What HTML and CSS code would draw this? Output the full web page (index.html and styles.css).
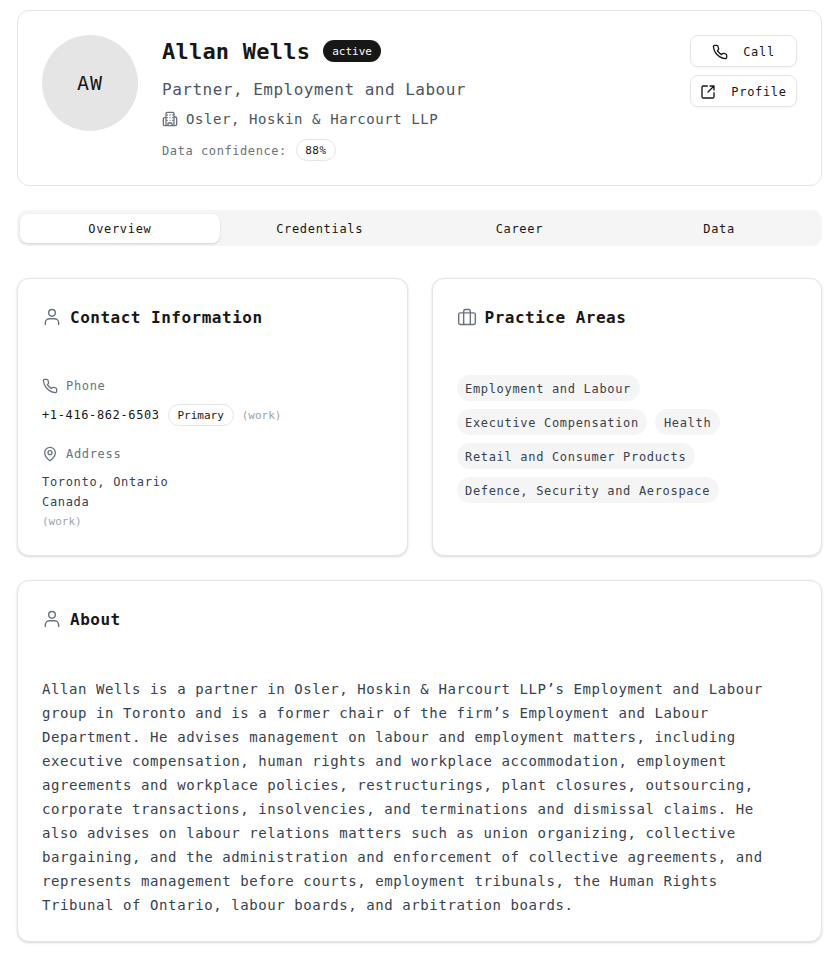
FILE: index.html
```html
<!doctype html>
<html lang="en">
<head>
	<meta charset="UTF-8">
	<title>Allan Wells</title>
	<link rel="stylesheet" href="styles.css">
</head>
<body>

	<div class="card heroCard">
		<div class="avatar">AW</div>
		<div class="heroInfo">
			<div class="nameRow">
				<h1 class="name">Allan Wells</h1>
				<span class="statusPill">active</span>
			</div>
			<p class="role">Partner, Employment and Labour</p>
			<p class="firm">
				<svg class="icon16" viewBox="0 0 24 24"><path d="M12 10h.01M12 14h.01M12 6h.01M16 10h.01M16 14h.01M16 6h.01M8 10h.01M8 14h.01M8 6h.01M9 22v-3a1 1 0 0 1 1-1h4a1 1 0 0 1 1 1v3M6 4v16a2 2 0 0 0 2 2h8a2 2 0 0 0 2-2V4a2 2 0 0 0-2-2H8a2 2 0 0 0-2 2ZM6 10H4a2 2 0 0 0-2 2v8a2 2 0 0 0 2 2h2M18 9h2a2 2 0 0 1 2 2v9a2 2 0 0 1-2 2h-2"/></svg>
				Osler, Hoskin &amp; Harcourt LLP
			</p>
			<div class="confidence">
				<span class="confidenceLabel">Data confidence:</span>
				<span class="confidencePill">88%</span>
			</div>
		</div>
		<div class="heroActions">
			<a class="actionBtn">
				<svg class="icon16 dark" viewBox="0 0 24 24"><path d="M22 16.92v3a2 2 0 0 1-2.18 2 19.79 19.79 0 0 1-8.63-3.07 19.5 19.5 0 0 1-6-6 19.79 19.79 0 0 1-3.07-8.67A2 2 0 0 1 4.11 2h3a2 2 0 0 1 2 1.72c.13.96.36 1.9.7 2.81a2 2 0 0 1-.45 2.11L8.09 9.91a16 16 0 0 0 6 6l1.27-1.27a2 2 0 0 1 2.11-.45c.91.34 1.85.57 2.81.7A2 2 0 0 1 22 16.92Z"/></svg>
				Call
			</a>
			<a class="actionBtn">
				<svg class="icon16 dark" viewBox="0 0 24 24"><path d="M21 13v6a2 2 0 0 1-2 2H5a2 2 0 0 1-2-2V5a2 2 0 0 1 2-2h6M21 9V3h-6M21 3l-9 9"/></svg>
				Profile
			</a>
		</div>
	</div>

	<div class="tabs">
		<div class="tab tabActive">Overview</div>
		<div class="tab">Credentials</div>
		<div class="tab">Career</div>
		<div class="tab">Data</div>
	</div>

	<div class="columns">
		<div class="card panel">
			<h2 class="panelTitle">
				<svg class="icon20" viewBox="0 0 24 24"><circle cx="12" cy="7" r="4"/><path d="M4 21v-2a5 5 0 0 1 5-5h6a5 5 0 0 1 5 5v2"/></svg>
				Contact Information
			</h2>
			<div class="panelBody">
				<div class="fieldLabel">
					<svg class="icon16" viewBox="0 0 24 24"><path d="M22 16.92v3a2 2 0 0 1-2.18 2 19.79 19.79 0 0 1-8.63-3.07 19.5 19.5 0 0 1-6-6 19.79 19.79 0 0 1-3.07-8.67A2 2 0 0 1 4.11 2h3a2 2 0 0 1 2 1.72c.13.96.36 1.9.7 2.81a2 2 0 0 1-.45 2.11L8.09 9.91a16 16 0 0 0 6 6l1.27-1.27a2 2 0 0 1 2.11-.45c.91.34 1.85.57 2.81.7A2 2 0 0 1 22 16.92Z"/></svg>
					Phone
				</div>
				<div class="phoneRow">
					<span class="phoneNumber">+1-416-862-6503</span>
					<span class="primaryPill">Primary</span>
					<span class="workNote">(work)</span>
				</div>
				<div class="fieldLabel addressLabel">
					<svg class="icon16" viewBox="0 0 24 24"><path d="M20 10c0 5-5.5 10.2-7.4 11.8a1 1 0 0 1-1.2 0C9.5 20.2 4 15 4 10a8 8 0 0 1 16 0Z"/><circle cx="12" cy="10" r="3"/></svg>
					Address
				</div>
				<div class="addressLine">Toronto, Ontario</div>
				<div class="addressLine">Canada</div>
				<div class="workNote workBelow">(work)</div>
			</div>
		</div>

		<div class="card panel">
			<h2 class="panelTitle">
				<svg class="icon20" viewBox="0 0 24 24"><path d="M8 21V5a2 2 0 0 1 2-2h4a2 2 0 0 1 2 2v16"/><rect x="2" y="7" width="20" height="14" rx="2"/></svg>
				Practice Areas
			</h2>
			<div class="panelBody tagList">
				<span class="tag">Employment and Labour</span>
				<span class="tag">Executive Compensation</span>
				<span class="tag">Health</span>
				<span class="tag">Retail and Consumer Products</span>
				<span class="tag">Defence, Security and Aerospace</span>
			</div>
		</div>
	</div>

	<div class="card panel">
		<h2 class="panelTitle">
			<svg class="icon20" viewBox="0 0 24 24"><circle cx="12" cy="7" r="4"/><path d="M4 21v-2a5 5 0 0 1 5-5h6a5 5 0 0 1 5 5v2"/></svg>
			About
		</h2>
		<p class="panelBody aboutText">Allan Wells is a partner in Osler, Hoskin &amp; Harcourt LLP’s Employment and Labour group in Toronto and is a former chair of the firm’s Employment and Labour Department. He advises management on labour and employment matters, including executive compensation, human rights and workplace accommodation, employment agreements and workplace policies, restructurings, plant closures, outsourcing, corporate transactions, insolvencies, and terminations and dismissal claims. He also advises on labour relations matters such as union organizing, collective bargaining, and the administration and enforcement of collective agreements, and represents management before courts, employment tribunals, the Human Rights Tribunal of Ontario, labour boards, and arbitration boards.</p>
	</div>

</body>
</html>
```

FILE: styles.css
```css
html, body {
	margin: 0;
	padding: 0;
}
body {
	padding: 10px 12px 16px 17px;
	background-color: #fff;
	color: #171717;
	font-family: "DejaVu Sans Mono", "Liberation Mono", monospace;
	font-size: 12px;
	letter-spacing: 0.68px;
}
p, h1, h2 {
	margin: 0;
	font-weight: normal;
}

svg {
	flex: none;
	fill: none;
	stroke: #6b7280;
	stroke-width: 2;
	stroke-linecap: round;
	stroke-linejoin: round;
}
.icon16 {
	width: 16px;
	height: 16px;
}
.icon20 {
	width: 20px;
	height: 20px;
	stroke-width: 1.7;
}
.dark {
	stroke: #171717;
}

.card {
	background-color: #fff;
	border: 1px solid #e5e5e5;
	border-radius: 12px;
}

/* top card */
.heroCard {
	display: flex;
	gap: 24px;
	padding: 24px;
}
.avatar {
	display: flex;
	flex: none;
	align-items: center;
	justify-content: center;
	width: 96px;
	height: 96px;
	border-radius: 50%;
	background-color: #e5e5e5;
	font-size: 20px;
	letter-spacing: 1px;
}
.heroInfo {
	flex: 1;
}
.nameRow {
	display: flex;
	align-items: center;
	gap: 13px;
	height: 32px;
}
.name {
	font-size: 22px;
	font-weight: bold;
	letter-spacing: 0.22px;
}
.statusPill {
	display: flex;
	align-items: center;
	justify-content: center;
	width: 58px;
	height: 22px;
	border-radius: 11px;
	background-color: #171717;
	color: #fafafa;
	font-size: 11px;
	letter-spacing: 0;
}
.role {
	margin-top: 11px;
	color: #4b5563;
	font-size: 16px;
	line-height: 24px;
	letter-spacing: 0.5px;
}
.firm {
	display: flex;
	align-items: center;
	gap: 8px;
	margin-top: 7px;
	color: #4b5563;
	font-size: 14px;
	letter-spacing: 0.58px;
	line-height: 20px;
}
.confidence {
	display: flex;
	align-items: center;
	gap: 9px;
	margin-top: 10px;
	color: #6b7280;
}
.confidenceLabel {
	padding-top: 2px;
	letter-spacing: 0.58px;
}
.confidencePill {
	display: flex;
	align-items: center;
	justify-content: center;
	width: 38px;
	height: 20px;
	border: 1px solid #e5e5e5;
	border-radius: 11px;
	color: #171717;
	font-size: 11px;
	letter-spacing: 0.5px;
}
.heroActions {
	display: flex;
	flex-direction: column;
	gap: 8px;
}
.actionBtn {
	display: flex;
	align-items: center;
	justify-content: center;
	gap: 15px;
	box-sizing: border-box;
	width: 107px;
	height: 32px;
	padding-top: 1px;
	border: 1px solid #e5e5e5;
	border-radius: 8px;
	box-shadow: 0 1px 2px rgba(0, 0, 0, 0.05);
}

/* tabs */
.tabs {
	display: grid;
	grid-template-columns: repeat(4, 1fr);
	margin: 24px 0 32px;
	padding: 4px 3px 3px;
	border-radius: 10px;
	background-color: #f5f5f5;
}
.tab {
	display: flex;
	align-items: center;
	justify-content: center;
	height: 29px;
	border-radius: 8px;
}
.tabActive {
	background-color: #fff;
	box-shadow: 0 1px 3px rgba(0, 0, 0, 0.1), 0 1px 2px rgba(0, 0, 0, 0.06);
}

/* panels */
.columns {
	display: grid;
	grid-template-columns: 1fr 1fr;
	gap: 24px;
	margin-bottom: 24px;
}
.panel {
	padding: 24px;
	box-shadow: 0 1px 3px rgba(0, 0, 0, 0.1), 0 1px 2px rgba(0, 0, 0, 0.06);
}
.panelTitle {
	display: flex;
	align-items: center;
	gap: 8px;
	height: 28px;
	font-size: 16px;
	font-weight: bold;
	letter-spacing: 0.5px;
}
.panelBody {
	margin-top: 44px;
}

.fieldLabel {
	display: flex;
	align-items: center;
	gap: 8px;
	height: 20px;
	padding-top: 1px;
	color: #6b7280;
}
.addressLabel {
	margin-top: 17px;
}
.phoneRow {
	display: flex;
	align-items: center;
	gap: 8px;
	height: 22px;
	margin-top: 8px;
}
.phoneNumber {
	letter-spacing: 0.62px;
}
.primaryPill {
	display: flex;
	align-items: center;
	justify-content: center;
	width: 64px;
	height: 20px;
	border: 1px solid #e5e5e5;
	border-radius: 11px;
	font-size: 11px;
	letter-spacing: 0;
}
.workNote {
	color: #9ca3af;
	font-size: 11px;
	letter-spacing: 0;
}
.workBelow {
	margin-top: 1px;
	line-height: 18px;
}
.addressLine {
	color: #374151;
	line-height: 20px;
}
.addressLabel + .addressLine {
	margin-top: 8px;
}

.tagList {
	display: flex;
	flex-wrap: wrap;
	gap: 8px;
}
.tag {
	display: flex;
	align-items: center;
	box-sizing: border-box;
	height: 26px;
	padding: 1px 8.5px 0;
	border-radius: 13px;
	background-color: #f5f5f5;
	color: #374151;
}

.aboutText {
	color: #374151;
	font-size: 14px;
	letter-spacing: 0.58px;
	line-height: 24px;
}
```
